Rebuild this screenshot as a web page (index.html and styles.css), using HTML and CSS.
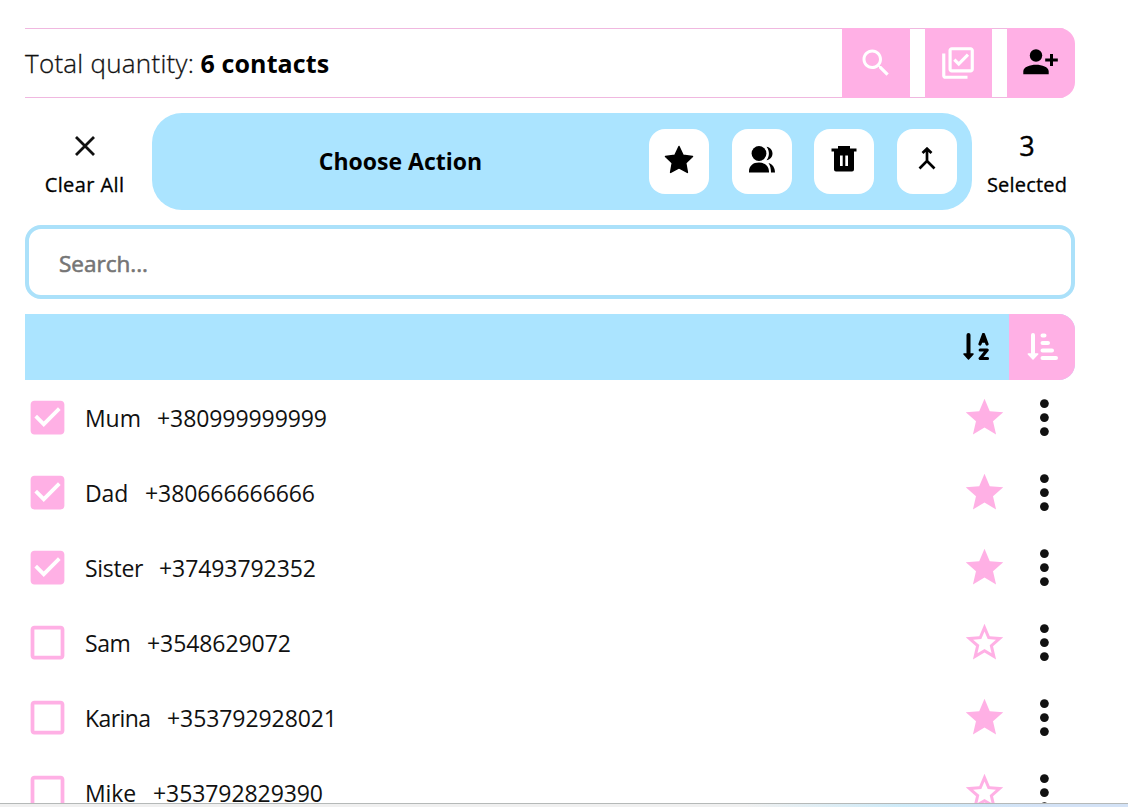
FILE: index.html
```html
<!DOCTYPE html>
<html lang="en">
<head>
<meta charset="utf-8">
<title>Contacts</title>
<link rel="stylesheet" href="styles.css">
</head>
<body>
<svg class="sprite" width="0" height="0">
  <symbol id="star" viewBox="0 0 24 24"><path d="M12 17.27 18.18 21l-1.64-7.03L22 9.24l-7.19-.61L12 2 9.19 8.63 2 9.24l5.46 4.73L5.82 21z"/></symbol>
  <symbol id="star-outline" viewBox="0 0 24 24"><path d="m22 9.24-7.19-.62L12 2 9.19 8.63 2 9.24l5.46 4.73L5.82 21 12 17.27 18.18 21l-1.63-7.03zM12 15.4l-3.76 2.27 1-4.28-3.32-2.88 4.38-.38L12 6.1l1.71 4.04 4.38.38-3.32 2.88 1 4.28z"/></symbol>
  <symbol id="checked" viewBox="0 0 24 24"><path d="M19 3H5c-1.1 0-2 .9-2 2v14c0 1.1.9 2 2 2h14c1.1 0 2-.9 2-2V5c0-1.100-.9-2-2-2m-9 14-5-5 1.410-1.410L10 14.170l7.590-7.590L19 8z"/></symbol>
  <symbol id="unchecked" viewBox="0 0 24 24"><path d="M19 5v14H5V5zm0-2H5c-1.100 0-2 .9-2 2v14c0 1.100.9 2 2 2h14c1.100 0 2-.9 2-2V5c0-1.100-.9-2-2-2"/></symbol>
  <symbol id="dots" viewBox="0 0 10 38"><circle cx="5.400" cy="4.600" r="4.4"/><circle cx="5.400" cy="18.600" r="4.4"/><circle cx="5.400" cy="32.600" r="4.4"/></symbol>
</svg>
<main class="app">
  <header class="summary">
    <p class="summary-text"><span class="total">Total quantity:</span> <b class="count">6 contacts</b></p>
    <button class="tool"><svg width="36" height="36" viewBox="0 0 24 24"><path d="M15.500 14h-.79l-.28-.27C15.410 12.590 16 11.110 16 9.500 16 5.910 13.090 3 9.500 3S3 5.910 3 9.500 5.910 16 9.500 16c1.610 0 3.090-.59 4.230-1.570l.27.28v.79l5 4.990L20.490 19zm-6 0C7.010 14 5 11.990 5 9.500S7.010 5 9.500 5 14 7.010 14 9.500 11.990 14 9.500 14"/></svg></button>
    <button class="tool"><svg width="38" height="38" viewBox="0 0 24 24"><path d="M20 4v12H8V4zm0-2H8c-1.100 0-2 .9-2 2v12c0 1.100.9 2 2 2h12c1.100 0 2-.9 2-2V4c0-1.100-.9-2-2-2m-7.530 12L9 10.500l1.400-1.410 2.070 2.080L17.600 6 19 7.410zM4 20h14v2H4c-1.100 0-2-.9-2-2V6h2z"/></svg></button>
    <button class="tool tool-add"><svg width="35" height="26" viewBox="0 0 35 26"><circle cx="13" cy="6.500" r="6.200"/><path d="M.3 25.300v-3C.3 18 7 15.700 13 15.700s12.700 2.300 12.700 6.600v3zM27 5h3v4.500h4.800v3H30V17h-3v-4.500h-4.800v-3H27z"/></svg></button>
  </header>

  <section class="selection">
    <div class="side">
      <svg class="close" width="22" height="22" viewBox="0 0 22 22"><path d="m2 2 18 18M20 2 2 20"/></svg>
      <span class="side-label clear">Clear All</span>
    </div>
    <div class="actions">
      <h2 class="actions-title">Choose Action</h2>
      <div class="action-list">
        <button class="action"><svg width="30" height="29" viewBox="0 0 30 29"><path class="rounded" d="m15 1.500 4.100 8.700 9.400 1.200-6.800 6.600 1.700 9.400-8.400-4.500-8.400 4.500 1.700-9.400-6.800-6.600 9.400-1.200z"/></svg></button>
        <button class="action"><svg width="26" height="27" viewBox="0 0 26 27"><circle cx="10" cy="7.500" r="7.400"/><path d="M0 26.500v-1C0 20 4 16.600 10 16.600s10 3.400 10 8.900v1zM17.500.8c3.600.6 6 3.100 6 6.700s-2.400 6.100-6 6.700c3.200-3.800 3.200-9.600 0-13.400M19.500 17c4 1.300 6.500 4.500 6.500 9.500h-4c0-4-.8-7-2.500-9.500"/></svg></button>
        <button class="action"><svg width="26" height="26" viewBox="0 0 26 26"><path fill-rule="evenodd" d="M7 0h12v2.500h6.500v3H23v18q0 2-2 2H5q-2 0-2-2v-18H.5v-3H7zm2 9.500V20h2.700V9.500zm5.300 0V20H17V9.500z"/></svg></button>
        <button class="action"><svg class="merge" width="20" height="24" viewBox="0 0 20 24"><path d="M10 2v12l-7.500 7.500M10 14l7.500 7.500M5.500 6 10 1.700 14.500 6"/></svg></button>
      </div>
    </div>
    <div class="side">
      <span class="number">3</span>
      <span class="side-label">Selected</span>
    </div>
  </section>

  <input class="search" type="text" placeholder="Search...">

  <div class="sortbar">
    <button class="sort"><svg width="27" height="28" viewBox="0 0 27 28"><path class="shaft" d="M5.500 2v19"/><path class="rounded" d="M1 21h9l-4.500 5z"/><path class="letter" d="m17 11 3.500-9.500L24 11M18 8.200h5M17.200 17h7l-7 8.500h7.300"/></svg></button>
    <button class="sort sort-order"><svg width="31" height="28" viewBox="0 0 31 28"><path class="shaft" d="M6 2v19"/><path class="rounded" d="M1.300 21h9.400L6 26z"/><path class="bars" d="M15.500 2.500h2M15.500 10h5.500M15.500 17.500h9.500M15.500 25h13.500"/></svg></button>
  </div>

  <ul class="contacts">
    <li class="contact"><svg class="icon"><use href="#checked"/></svg><span class="name">Mum</span><span class="phone">+380999999999</span><svg class="icon"><use href="#star"/></svg><svg class="dots"><use href="#dots"/></svg></li>
    <li class="contact"><svg class="icon"><use href="#checked"/></svg><span class="name dad">Dad</span><span class="phone">+380666666666</span><svg class="icon"><use href="#star"/></svg><svg class="dots"><use href="#dots"/></svg></li>
    <li class="contact"><svg class="icon"><use href="#checked"/></svg><span class="name sister">Sister</span><span class="phone">+37493792352</span><svg class="icon"><use href="#star"/></svg><svg class="dots"><use href="#dots"/></svg></li>
    <li class="contact"><svg class="icon"><use href="#unchecked"/></svg><span class="name sam">Sam</span><span class="phone">+3548629072</span><svg class="icon"><use href="#star-outline"/></svg><svg class="dots"><use href="#dots"/></svg></li>
    <li class="contact"><svg class="icon"><use href="#unchecked"/></svg><span class="name karina">Karina</span><span class="phone">+353792928021</span><svg class="icon"><use href="#star"/></svg><svg class="dots"><use href="#dots"/></svg></li>
    <li class="contact"><svg class="icon"><use href="#unchecked"/></svg><span class="name mike">Mike</span><span class="phone">+353792829390</span><svg class="icon"><use href="#star-outline"/></svg><svg class="dots"><use href="#dots"/></svg></li>
  </ul>
</main>
<footer class="edge"></footer>
</body>
</html>
```

FILE: styles.css
```css
* { box-sizing: border-box; }
body {
  margin: 0;
  height: 807px;
  overflow: hidden;
  display: flex;
  flex-direction: column;
  background: #fff;
  color: #111;
  font-family: "Open Sans", "Noto Sans", sans-serif;
}
button { border: 0; padding: 0; display: flex; align-items: center; justify-content: center; color: #000; font: inherit; }
svg { display: block; fill: currentColor; }
.sprite { position: absolute; }
.app {
  height: 803px;
  flex: none;
  padding: 28px 53px 0 25px;
  overflow: hidden;
  display: flex;
  flex-direction: column;
}
.app > * { flex: none; }
.summary {
  height: 70px;
  display: grid;
  grid-template-columns: 802px 68px 67px 68px;
  grid-template-rows: 70px;
  column-gap: 15px;
  border-radius: 0 16px 16px 0;
  background: linear-gradient(#f0b8e0, #f0b8e0) top / 100% 1px no-repeat, linear-gradient(#f0b8e0, #f0b8e0) bottom / 100% 1px no-repeat;
}
.summary-text { margin: 0; line-height: 71px; font-size: 25px; white-space: nowrap; }
.total { font-weight: 300; font-size: 26px; letter-spacing: .25px; -webkit-text-stroke: .3px; }
.count { font-weight: 700; color: #000; letter-spacing: .1px; }
.tool { background: #ffb0e5; color: #fff; padding: 0 1px 1px 0; }
.tool-add { color: #000; padding: 0 2px 2px 0; border-radius: 0 16px 16px 0; }
.selection {
  margin-top: 15px;
  height: 97px;
  display: grid;
  grid-template-columns: 112px 820px 80px;
  column-gap: 15px;
}
.side { display: flex; flex-direction: column; align-items: center; justify-content: flex-end; padding-bottom: 11px; white-space: nowrap; }
.side:first-child { padding-left: 7px; }
.side-label { font-size: 20px; line-height: 28px; letter-spacing: .2px; color: #000; -webkit-text-stroke: .3px; }
.clear { letter-spacing: .4px; }
.close { fill: none; stroke: #111; stroke-width: 2.8; margin-bottom: 14px; }
.number { font-size: 27px; line-height: 38px; margin-bottom: 6px; color: #000; -webkit-text-stroke: .4px; }
.actions {
  display: grid;
  grid-template-columns: 497px 308px;
  align-items: center;
  border-radius: 30px;
  background: #abe4ff;
}
.action-list { display: grid; grid-template-columns: repeat(4, 60px); justify-content: space-between; }
.actions-title { margin: 0; padding-bottom: 1px; text-align: center; font-size: 23px; font-weight: 700; color: #000; }
.action { height: 65px; padding-bottom: 5px; border-radius: 16px; background: #fff; }
.rounded { stroke: currentColor; stroke-width: 1.5; stroke-linejoin: round; }
.merge path { fill: none; stroke: #000; stroke-width: 2.7; }
.search {
  margin-top: 15px;
  width: 1050px;
  height: 74px;
  padding: 2px 30px 0;
  border: 4px solid #abe1fa;
  border-radius: 16px;
  background: #fff;
  font: 22.500px "Open Sans", sans-serif;
}
.search::placeholder { color: #757575; opacity: 1; -webkit-text-stroke: .6px #757575; }
.sortbar { margin-top: 15px; height: 66px; display: flex; justify-content: flex-end; background: #abe4ff; border-radius: 0 16px 16px 0; }
.sort { width: 66px; background: none; }
.sort-order { background: #ffb0e5; color: #fff; border-radius: 0 16px 16px 0; }
.shaft { fill: none; stroke: currentColor; stroke-width: 4; stroke-linecap: round; }
.letter { fill: none; stroke: currentColor; stroke-width: 3.2; stroke-linejoin: round; stroke-linecap: round; }
.bars { stroke: currentColor; stroke-width: 4; stroke-linecap: round; }
.contacts { list-style: none; margin: 0; padding: 0; }
.contact { height: 75px; display: flex; align-items: center; white-space: nowrap; font-size: 23px; letter-spacing: -.08px; }
.icon { width: 45px; height: 45px; color: #ffb0e5; flex: none; }
.name { margin-left: 15px; width: 72px; }
.phone { flex: 1; }
.dad { width: 60px; }
.sister { width: 74px; letter-spacing: -.3px; }
.sam { width: 62px; letter-spacing: -.4px; }
.karina { width: 82px; letter-spacing: -.6px; }
.mike { width: 68px; }
.dots { width: 10px; height: 38px; margin: 0 26px 0 32px; color: #111; flex: none; }
.edge { height: 4px; background: linear-gradient(90deg, #f0f0f0 66%, #cdeaf8 80%, #d3e2f6 92%); border-top: 1px solid #b5b9b8; }
```
